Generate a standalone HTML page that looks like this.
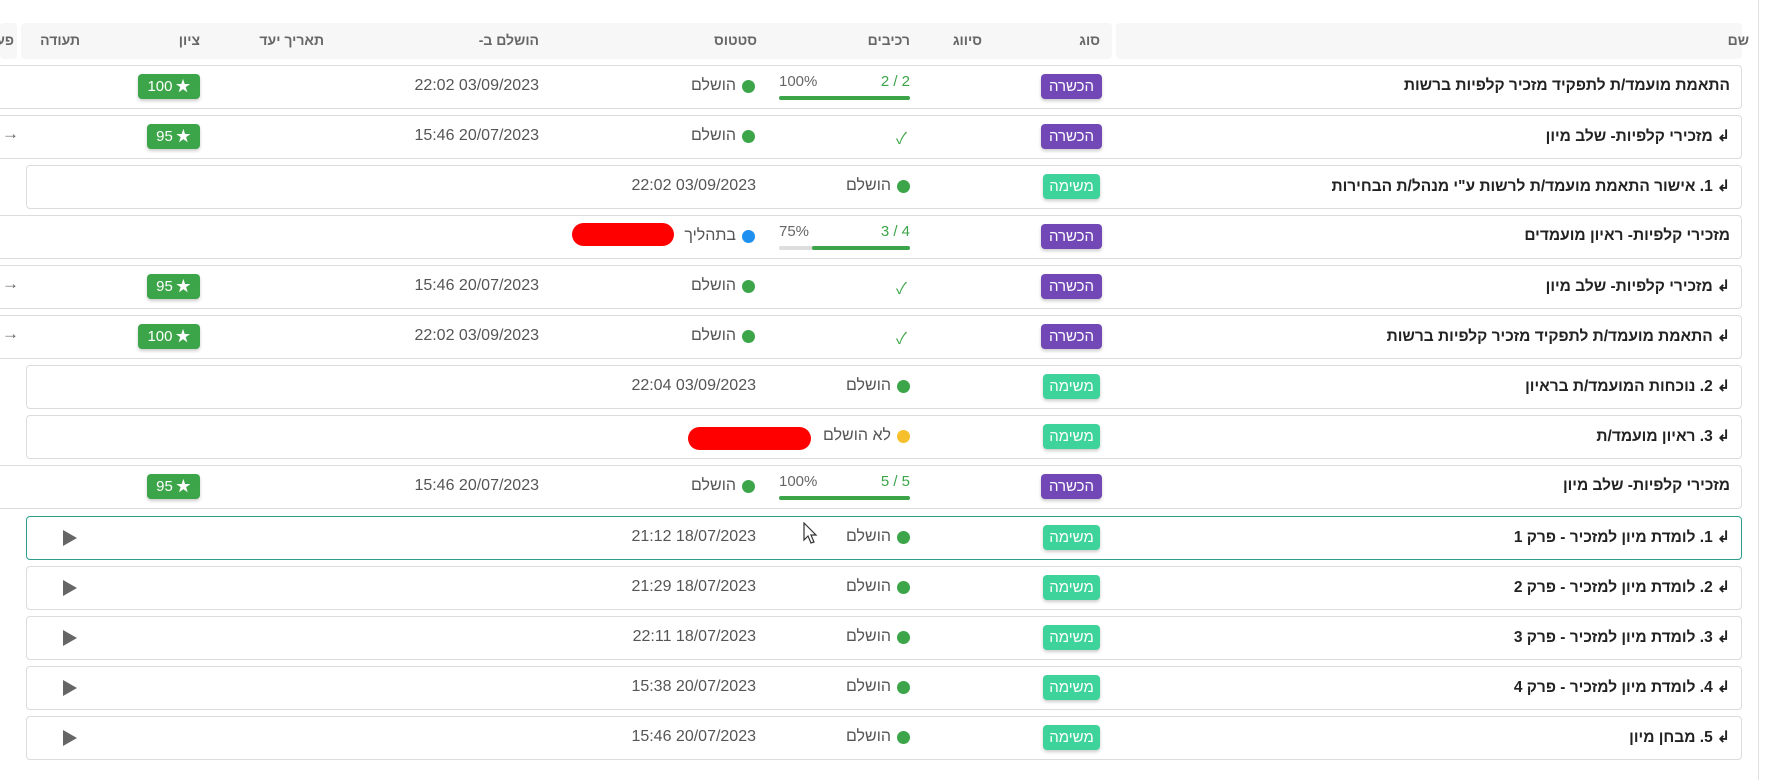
<!DOCTYPE html>
<html><head><meta charset="utf-8"><style>
*{margin:0;padding:0;box-sizing:border-box}
body{width:1777px;height:780px;background:#fff;position:relative;overflow:hidden;font-family:"Liberation Sans","Noto Sans CJK SC",sans-serif;color:#555}
.a{position:absolute;white-space:nowrap;direction:rtl}
.l{direction:ltr}
.hd{position:absolute;top:23px;height:36px;background:#f7f7f7;border-radius:4px}
.ht{position:absolute;top:32px;font-size:14px;font-weight:bold;color:#666;direction:rtl;white-space:nowrap}
.row{position:absolute;height:44px;border:1px solid #dcdcdc;border-radius:4px;background:#fff}
.nm{font-weight:bold;font-size:15.5px;color:#222}
.bd{position:absolute;height:25px;border-radius:4px;color:#fff;font-size:15px;text-align:center;line-height:25px;box-shadow:0 2px 3px rgba(0,0,0,.2)}
.pu{background:#7148b5;width:61px;left:1041px}
.gr{background:#3dd39a;width:57px;left:1043px}
.dt{font-size:16px;color:#555}
.dot{position:absolute;width:13px;height:13px;border-radius:50%;background:#3ca549}
.sc{position:absolute;height:25px;border-radius:4px;background:#3ca549;color:#fff;font-size:15px;line-height:25px;box-shadow:0 2px 3px rgba(0,0,0,.2);display:flex;flex-direction:row;justify-content:center;gap:3px}
.bar{position:absolute;height:4px;background:#3ca549;border-radius:2px}
.pg{font-size:15px;color:#3ca549}
.play{position:absolute;width:0;height:0;border-top:8px solid transparent;border-bottom:8px solid transparent;border-left:14px solid #666}
</style></head><body>
<div class="hd" style="left:0;width:17px"></div>
<div class="hd" style="left:21px;width:1091px"></div>
<div class="hd" style="left:1116px;width:626px"></div>
<div class="ht" style="right:28px">שם</div>
<div class="ht" style="right:677px">סוג</div>
<div class="ht" style="right:795px">סיווג</div>
<div class="ht" style="right:867px">רכיבים</div>
<div class="ht" style="right:1020px">סטטוס</div>
<div class="ht" style="right:1238px">הושלם ב-</div>
<div class="ht" style="right:1453px">תאריך יעד</div>
<div class="ht" style="right:1577px">ציון</div>
<div class="ht" style="right:1697px">תעודה</div>
<div class="ht" style="right:1763px">פע</div>
<div class="a" style="right:0;top:0;width:19px;height:780px;border-left:1px solid #e0e0e0;background:#fff"></div>

<!-- 1 -->
<div class="row" style="left:-10px;width:1752px;top:65px"></div>
<div class="a nm" style="right:47px;top:77px">התאמת מועמד/ת לתפקיד מזכיר קלפיות ברשות</div>
<div class="bd pu" style="top:74px">הכשרה</div>
<div class="a pg l" style="right:867px;top:73px">2 / 2</div><div class="a pg l" style="left:779px;top:73px;color:#666">100%</div>
<div class="bar" style="left:779px;width:131px;top:96px"></div>
<div class="dot" style="left:742px;top:80px"></div><div class="a dt" style="right:1041px;top:77px">הושלם</div>
<div class="a dt l" style="right:1238px;top:77px">22:02 03/09/2023</div>
<div class="sc" style="left:138px;width:62px;top:74px"><span>100</span><span>★</span></div>
<!-- 2 -->
<div class="row" style="left:-10px;width:1752px;top:115px"></div>
<div class="a nm" style="right:47px;top:127px">↲ מזכירי קלפיות- שלב מיון</div>
<div class="bd pu" style="top:124px">הכשרה</div>
<div class="a" style="left:896px;top:125px;color:#3ca549;font-size:16px">✓</div>
<div class="dot" style="left:742px;top:130px"></div><div class="a dt" style="right:1041px;top:127px">הושלם</div>
<div class="a dt l" style="right:1238px;top:127px">15:46 20/07/2023</div>
<div class="sc" style="left:147px;width:53px;top:124px"><span>95</span><span>★</span></div>
<div class="a" style="left:2px;top:124px;font-size:17px;color:#666">→</div>
<!-- 3 -->
<div class="row" style="left:26px;width:1716px;top:165px"></div>
<div class="a nm" style="right:47px;top:177px">↲ 1. אישור התאמת מועמד/ת לרשות ע"י מנהל/ת הבחירות</div>
<div class="bd gr" style="top:174px">משימה</div>
<div class="dot" style="left:897px;top:180px"></div><div class="a dt" style="right:886px;top:177px">הושלם</div>
<div class="a dt l" style="right:1021px;top:177px">22:02 03/09/2023</div>
<!-- 4 -->
<div class="row" style="left:-10px;width:1752px;top:215px"></div>
<div class="a nm" style="right:47px;top:227px">מזכירי קלפיות- ראיון מועמדים</div>
<div class="bd pu" style="top:224px">הכשרה</div>
<div class="a pg l" style="right:867px;top:223px">3 / 4</div><div class="a pg l" style="left:779px;top:223px;color:#666">75%</div>
<div class="bar" style="left:779px;width:131px;top:246px;background:#ddd"></div><div class="bar" style="left:812px;width:98px;top:246px"></div>
<div class="dot" style="left:742px;top:230px;background:#1e90ef"></div><div class="a dt" style="right:1041px;top:227px">בתהליך</div>
<div class="a" style="left:572px;top:223px;width:102px;height:23px;border-radius:12px;background:#f00"></div>
<!-- 5 -->
<div class="row" style="left:-10px;width:1752px;top:265px"></div>
<div class="a nm" style="right:47px;top:277px">↲ מזכירי קלפיות- שלב מיון</div>
<div class="bd pu" style="top:274px">הכשרה</div>
<div class="a" style="left:896px;top:275px;color:#3ca549;font-size:16px">✓</div>
<div class="dot" style="left:742px;top:280px"></div><div class="a dt" style="right:1041px;top:277px">הושלם</div>
<div class="a dt l" style="right:1238px;top:277px">15:46 20/07/2023</div>
<div class="sc" style="left:147px;width:53px;top:274px"><span>95</span><span>★</span></div>
<div class="a" style="left:2px;top:274px;font-size:17px;color:#666">→</div>
<!-- 6 -->
<div class="row" style="left:-10px;width:1752px;top:315px"></div>
<div class="a nm" style="right:47px;top:327px">↲ התאמת מועמד/ת לתפקיד מזכיר קלפיות ברשות</div>
<div class="bd pu" style="top:324px">הכשרה</div>
<div class="a" style="left:896px;top:325px;color:#3ca549;font-size:16px">✓</div>
<div class="dot" style="left:742px;top:330px"></div><div class="a dt" style="right:1041px;top:327px">הושלם</div>
<div class="a dt l" style="right:1238px;top:327px">22:02 03/09/2023</div>
<div class="sc" style="left:138px;width:62px;top:324px"><span>100</span><span>★</span></div>
<div class="a" style="left:2px;top:324px;font-size:17px;color:#666">→</div>
<!-- 7 -->
<div class="row" style="left:26px;width:1716px;top:365px"></div>
<div class="a nm" style="right:47px;top:377px">↲ 2. נוכחות המועמד/ת בראיון</div>
<div class="bd gr" style="top:374px">משימה</div>
<div class="dot" style="left:897px;top:380px"></div><div class="a dt" style="right:886px;top:377px">הושלם</div>
<div class="a dt l" style="right:1021px;top:377px">22:04 03/09/2023</div>
<!-- 8 -->
<div class="row" style="left:26px;width:1716px;top:415px"></div>
<div class="a nm" style="right:47px;top:427px">↲ 3. ראיון מועמד/ת</div>
<div class="bd gr" style="top:424px">משימה</div>
<div class="dot" style="left:897px;top:430px;background:#f6bf2c"></div><div class="a dt" style="right:886px;top:427px">לא הושלם</div>
<div class="a" style="left:688px;top:427px;width:123px;height:23px;border-radius:12px;background:#f00"></div>
<!-- 9 -->
<div class="row" style="left:-10px;width:1752px;top:465px"></div>
<div class="a nm" style="right:47px;top:477px">מזכירי קלפיות- שלב מיון</div>
<div class="bd pu" style="top:474px">הכשרה</div>
<div class="a pg l" style="right:867px;top:473px">5 / 5</div><div class="a pg l" style="left:779px;top:473px;color:#666">100%</div>
<div class="bar" style="left:779px;width:131px;top:496px"></div>
<div class="dot" style="left:742px;top:480px"></div><div class="a dt" style="right:1041px;top:477px">הושלם</div>
<div class="a dt l" style="right:1238px;top:477px">15:46 20/07/2023</div>
<div class="sc" style="left:147px;width:53px;top:474px"><span>95</span><span>★</span></div>
<!-- 10-14 -->
<div class="row" style="left:26px;width:1716px;top:516px;border-color:#2e9e8c"></div>
<div class="a nm" style="right:47px;top:528px">↲ 1. לומדת מיון למזכיר - פרק 1</div>
<div class="bd gr" style="top:525px">משימה</div>
<div class="dot" style="left:897px;top:531px"></div><div class="a dt" style="right:886px;top:528px">הושלם</div>
<div class="a dt l" style="right:1021px;top:528px">21:12 18/07/2023</div>
<div class="play" style="left:63px;top:530px"></div>

<div class="row" style="left:26px;width:1716px;top:566px"></div>
<div class="a nm" style="right:47px;top:578px">↲ 2. לומדת מיון למזכיר - פרק 2</div>
<div class="bd gr" style="top:575px">משימה</div>
<div class="dot" style="left:897px;top:581px"></div><div class="a dt" style="right:886px;top:578px">הושלם</div>
<div class="a dt l" style="right:1021px;top:578px">21:29 18/07/2023</div>
<div class="play" style="left:63px;top:580px"></div>

<div class="row" style="left:26px;width:1716px;top:616px"></div>
<div class="a nm" style="right:47px;top:628px">↲ 3. לומדת מיון למזכיר - פרק 3</div>
<div class="bd gr" style="top:625px">משימה</div>
<div class="dot" style="left:897px;top:631px"></div><div class="a dt" style="right:886px;top:628px">הושלם</div>
<div class="a dt l" style="right:1021px;top:628px">22:11 18/07/2023</div>
<div class="play" style="left:63px;top:630px"></div>

<div class="row" style="left:26px;width:1716px;top:666px"></div>
<div class="a nm" style="right:47px;top:678px">↲ 4. לומדת מיון למזכיר - פרק 4</div>
<div class="bd gr" style="top:675px">משימה</div>
<div class="dot" style="left:897px;top:681px"></div><div class="a dt" style="right:886px;top:678px">הושלם</div>
<div class="a dt l" style="right:1021px;top:678px">15:38 20/07/2023</div>
<div class="play" style="left:63px;top:680px"></div>

<div class="row" style="left:26px;width:1716px;top:716px"></div>
<div class="a nm" style="right:47px;top:728px">↲ 5. מבחן מיון</div>
<div class="bd gr" style="top:725px">משימה</div>
<div class="dot" style="left:897px;top:731px"></div><div class="a dt" style="right:886px;top:728px">הושלם</div>
<div class="a dt l" style="right:1021px;top:728px">15:46 20/07/2023</div>
<div class="play" style="left:63px;top:730px"></div>

<svg class="a" style="left:803px;top:522px" width="16" height="24" viewBox="0 0 16 24"><path d="M1 1 L1 18 L5 14 L8 21 L11 20 L8 13 L13 13 Z" fill="#fff" stroke="#333" stroke-width="1.2"/></svg>
</body></html>
